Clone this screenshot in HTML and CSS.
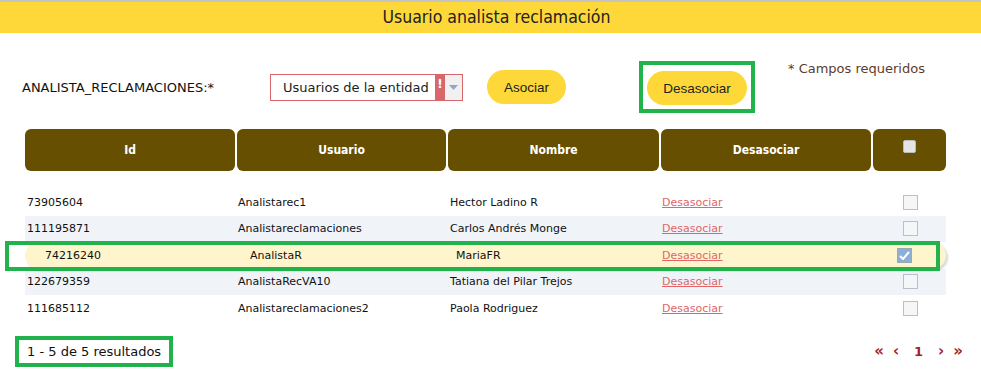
FILE: index.html
```html
<!DOCTYPE html>
<html>
<head>
    <meta charset="utf-8" />
    <title>Usuario analista reclamación</title>
    <link rel="stylesheet" href="styles.css">
</head>
<body>
    <div id="titlebar">Usuario analista reclamación</div>

    <div id="toolbar">
        <label class="field-label">ANALISTA_RECLAMACIONES:*</label>
        <div class="select">
            <span class="select-text">Usuarios de la entidad</span>
            <span class="select-error">!</span>
            <span class="select-arrow">
                <svg width="9" height="5" viewBox="0 0 9 5"><path d="M0 0h9L4.5 5z" fill="#8fa8c8"/></svg>
            </span>
        </div>
        <button class="btn" id="asociar">Asociar</button>
        <div class="mark" id="mark-desasociar">
            <button class="btn" id="desasociar">Desasociar</button>
        </div>
        <p id="required">* Campos requeridos</p>
    </div>

    <div id="grid">
        <div class="head">
            <div class="th">Id</div>
            <div class="th">Usuario</div>
            <div class="th">Nombre</div>
            <div class="th">Desasociar</div>
            <div class="th"><span class="head-check"></span></div>
        </div>
        <div class="row">
            <div class="td">73905604</div>
            <div class="td">Analistarec1</div>
            <div class="td">Hector Ladino R</div>
            <div class="td"><a href="#">Desasociar</a></div>
            <div class="td check-cell"><span class="check"></span></div>
        </div>
        <div class="row alt">
            <div class="td">111195871</div>
            <div class="td">Analistareclamaciones</div>
            <div class="td">Carlos Andrés Monge</div>
            <div class="td"><a href="#">Desasociar</a></div>
            <div class="td check-cell"><span class="check"></span></div>
        </div>
        <div class="row selected">
            <div class="td">74216240</div>
            <div class="td">AnalistaR</div>
            <div class="td">MariaFR</div>
            <div class="td"><a href="#">Desasociar</a></div>
            <div class="td check-cell"><span class="check checked">
                <svg width="11" height="9" viewBox="0 0 11 9"><path d="M1 5l3 3 6-7" fill="none" stroke="#fff" stroke-width="2"/></svg>
            </span></div>
            <div class="row-mark"></div>
        </div>
        <div class="row alt">
            <div class="td">122679359</div>
            <div class="td">AnalistaRecVA10</div>
            <div class="td">Tatiana del Pilar Trejos</div>
            <div class="td"><a href="#">Desasociar</a></div>
            <div class="td check-cell"><span class="check"></span></div>
        </div>
        <div class="row">
            <div class="td">111685112</div>
            <div class="td">Analistareclamaciones2</div>
            <div class="td">Paola Rodriguez</div>
            <div class="td"><a href="#">Desasociar</a></div>
            <div class="td check-cell"><span class="check"></span></div>
        </div>
    </div>

    <div id="footer">
        <div class="mark" id="results">1 - 5 de 5 resultados</div>
        <div id="pager">
            <span class="pg">&laquo;</span>
            <span class="pg">&lsaquo;</span>
            <span class="pg num">1</span>
            <span class="pg">&rsaquo;</span>
            <span class="pg">&raquo;</span>
        </div>
    </div>
</body>
</html>
```

FILE: styles.css
```css
body{
    margin: 0;
    font-family: "DejaVu Sans", Verdana, sans-serif;
    background-color: #fff;
    color: #111;
}
#titlebar{
    border-top: 2px solid #c4c4c4;
    background-color: #fdd838;
    height: 31px;
    line-height: 31px;
    padding-left: 12px;
    text-align: center;
    font-family: "DejaVu Sans Condensed", sans-serif;
    font-size: 17.5px;
    color: #222;
}
#toolbar{
    display: flex;
    align-items: center;
    padding: 28px 0 0 22px;
}
.field-label{
    width: 248px;
    font-size: 13px;
    color: #111;
}
.select{
    display: flex;
    width: 191px;
    height: 25px;
    border: 1px solid #d9666a;
}
.select-text{
    flex: 1;
    padding-left: 12px;
    line-height: 25px;
    font-size: 13px;
    color: #222;
}
.select-error{
    width: 10px;
    background-color: #d9666a;
    color: #fff;
    font-weight: bold;
    font-size: 12px;
    text-align: center;
    line-height: 18px;
}
.select-arrow{
    width: 17px;
    background-color: #f1f1f1;
    display: flex;
    align-items: center;
    justify-content: center;
}
.btn{
    height: 34px;
    border: 0;
    border-radius: 17px;
    background-color: #fdd838;
    font-family: "Liberation Sans", Arial, sans-serif;
    font-size: 13.5px;
    color: #222;
    cursor: pointer;
}
#asociar{
    width: 79px;
    margin-left: 24px;
}
#desasociar{
    width: 100px;
}
.mark{
    border: 4px solid #22b24c;
}
#mark-desasociar{
    margin-left: 73px;
    padding: 6px 4px 4px 4px;
}
#required{
    align-self: flex-start;
    margin: 0 0 0 33px;
    font-size: 13px;
    color: #5c3b2e;
}
#grid{
    margin: 16px 0 0 25px;
    width: 921px;
}
.head, .row{
    display: grid;
    grid-template-columns: 210px 209px 211px 210px 73px;
    column-gap: 2px;
}
.head{
    height: 42px;
    margin-bottom: 18px;
}
.th{
    background-color: #664f00;
    border-radius: 6px;
    color: #fff;
    font-family: "DejaVu Sans Condensed", sans-serif;
    font-weight: bold;
    font-size: 12px;
    display: flex;
    align-items: center;
    justify-content: center;
}
.head-check{
    width: 11px;
    height: 11px;
    background-color: #e4e4e4;
    border: 1px solid #bbb;
    border-radius: 2px;
    margin-top: -8px;
}
.row{
    height: 26.5px;
    align-items: center;
    font-size: 11px;
}
.row .td{
    padding-left: 2px;
}
.row .td:nth-child(2), .row .td:nth-child(4){
    padding-left: 1px;
}
.alt{
    background-color: #f0f4f9;
}
a{
    color: #e06666;
    text-decoration: underline;
}
.check-cell{
    display: flex;
    justify-content: center;
}
.check{
    width: 13px;
    height: 13px;
    border: 1px solid #b8c0cc;
    background-color: #f4f6f8;
    display: flex;
    align-items: center;
    justify-content: center;
}
.selected{
    position: relative;
    background-color: #fff5cc;
    border-radius: 14px;
    box-shadow: 2px 2px 2px rgba(0,0,0,0.15);
}
.selected .td:nth-child(1){
    padding-left: 20px;
}
.selected .td:nth-child(2){
    padding-left: 13px;
}
.selected .td:nth-child(3){
    padding-left: 8px;
}
.selected .check-cell{
    padding-right: 12px;
}
.check.checked{
    background-color: #8ab0d8;
    border-color: #9aa8b8;
}
.row-mark{
    position: absolute;
    left: -20px;
    right: 6px;
    top: -1px;
    bottom: -2px;
    border: 4px solid #22b24c;
}
#footer{
    display: flex;
    justify-content: space-between;
    align-items: center;
    margin: 14px 18px 0 15px;
}
#results{
    padding: 4px 8px 4px 8px;
    font-size: 13px;
    color: #111;
}
#pager{
    display: flex;
    align-items: center;
    gap: 9px;
    color: #a81f1f;
    font-weight: bold;
    font-size: 15px;
}
.pg.num{
    font-size: 13px;
    margin: 0 6px;
}
```
